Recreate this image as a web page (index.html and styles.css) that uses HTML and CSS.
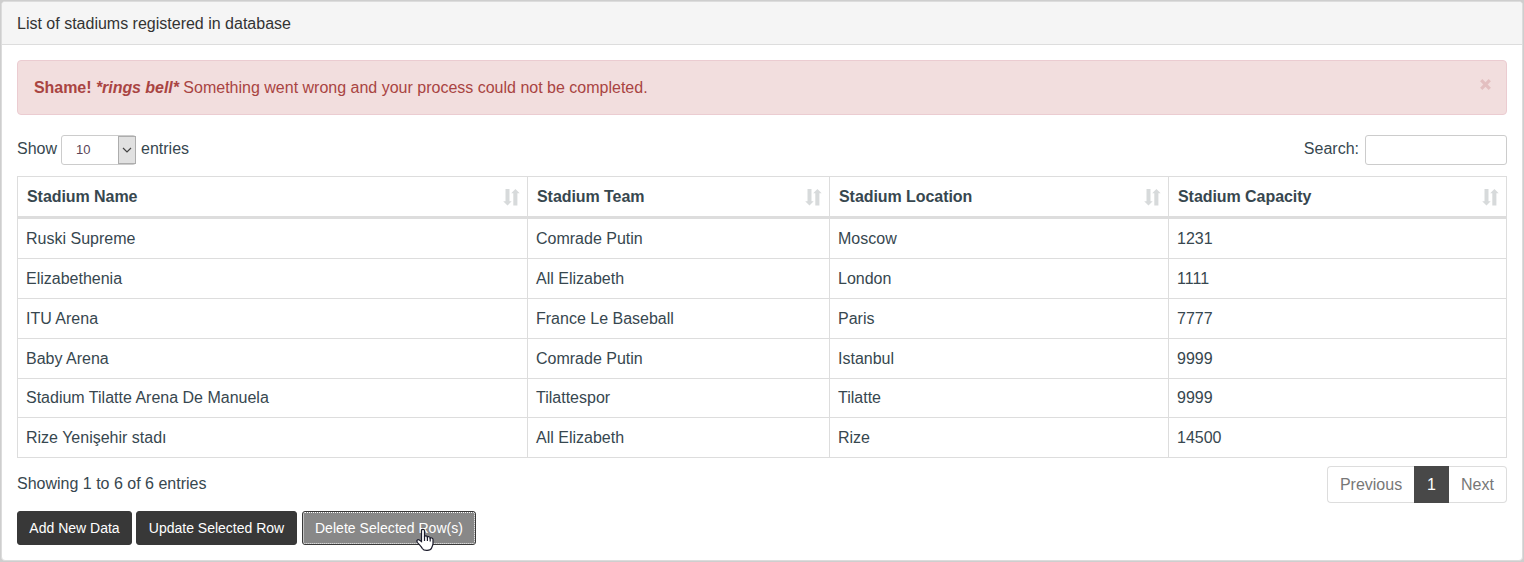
FILE: index.html
```html
<!DOCTYPE html>
<html lang="en">
<head>
<meta charset="utf-8">
<title>Stadiums</title>
<link rel="stylesheet" href="styles.css">
</head>
<body>
<svg class="defs" width="0" height="0"><defs>
<symbol id="sort" viewBox="0 0 17 17"><path d="M2.500 0h4v12.200h2.200L4.500 16.500.2 12.200h2.300zM10.300 16.500v-12.200H8.200L12.400 0l4.300 4.300h-2.300v12.200z"/></symbol>
</defs></svg>
<section class="panel">
  <header class="panel-heading">List of stadiums registered in database</header>
  <div class="panel-body">
    <div class="alert"><p class="message"><strong>Shame! <em>*rings bell*</em></strong> Something went wrong and your process could not be completed.</p>
      <svg class="close" viewBox="0 0 11 11"><path d="M1.200 1.200l8.600 8.600M9.800 1.200L1.200 9.800"/></svg></div>
    <div class="controls">
      <div class="length"><span class="show">Show</span><span class="select"><span class="value">10</span><span class="drop"><svg viewBox="0 0 10 6" width="10" height="6"><path d="M1 1l4 4 4-4"/></svg></span></span><span>entries</span></div>
      <label class="search">Search:<input class="field" type="text"></label>
    </div>
    <table class="table">
      <colgroup><col class="c1"><col class="c2"><col class="c3"><col class="c4"></colgroup>
      <thead><tr>
        <th><div class="th">Stadium Name<svg class="sort"><use href="#sort"/></svg></div></th>
        <th><div class="th">Stadium Team<svg class="sort"><use href="#sort"/></svg></div></th>
        <th><div class="th">Stadium Location<svg class="sort"><use href="#sort"/></svg></div></th>
        <th><div class="th">Stadium Capacity<svg class="sort"><use href="#sort"/></svg></div></th>
      </tr></thead>
      <tbody>
        <tr><td>Ruski Supreme</td><td>Comrade Putin</td><td>Moscow</td><td>1231</td></tr>
        <tr><td>Elizabethenia</td><td>All Elizabeth</td><td>London</td><td>1111</td></tr>
        <tr><td>ITU Arena</td><td>France Le Baseball</td><td>Paris</td><td>7777</td></tr>
        <tr><td>Baby Arena</td><td>Comrade Putin</td><td>Istanbul</td><td>9999</td></tr>
        <tr class="short"><td>Stadium Tilatte Arena De Manuela</td><td>Tilattespor</td><td>Tilatte</td><td>9999</td></tr>
        <tr><td>Rize Yenişehir stadı</td><td>All Elizabeth</td><td>Rize</td><td>14500</td></tr>
      </tbody>
    </table>
    <div class="footer">
      <span class="info">Showing 1 to 6 of 6 entries</span>
      <div class="pages"><span class="page prev">Previous</span><span class="page active">1</span><span class="page next">Next</span></div>
    </div>
    <div class="actions">
      <button class="btn add">Add New Data</button>
      <button class="btn update">Update Selected Row</button>
      <button class="btn delete">Delete Selected Row(s)</button>
      <svg class="cursor" viewBox="0 0 18 24"><path d="M5.500 13.500V2.400C5.500.9 8.500.9 8.500 2.400V8.500C9 7.400 11.200 7.700 11.400 9.200C12 8.300 14 8.700 14.200 10.100C15.200 9.400 17 9.900 17 11.500V15.500C17 17.500 16 19 15.500 20.200C14.500 22.800 8 23.400 6.300 20.500C5.500 18.800 3.500 17 1.500 14.500C0 12.400 1.800 11 3.300 12z"/><path class="fingers" d="M8.500 8v5M11.400 9v4M14.200 10v3.500"/></svg>
    </div>
  </div>
</section>
</body>
</html>
```
FILE: styles.css
```css
* { box-sizing: border-box; }
body {
  margin: 0;
  height: 562px;
  padding: 1px;
  overflow: hidden;
  background: #cecece;
  color: #37474f;
  font: 16px/24px "Liberation Sans", Arial, sans-serif;
}
.defs { position: absolute; }
.panel {
  height: 560px;
  background: #fff;
  border: 1px solid #dcdcdc;
  border-radius: 4px;
  overflow: hidden;
}
.panel-heading {
  height: 43px;
  padding: 10px 15px 8px;
  background: #f5f5f5;
  border-bottom: 1px solid #ddd;
  color: #333;
}
.panel-body { padding: 15px 15px 0; }
.alert {
  display: flex;
  justify-content: space-between;
  height: 55px;
  padding: 15px 15px 0 16px;
  background: #f2dede;
  border: 1px solid #ebccd1;
  border-radius: 4px;
  color: #a94442;
}
.message { margin: 0; }
.message strong { letter-spacing: -0.05px; }
.close {
  width: 11px;
  height: 11px;
  margin-top: 3px;
  fill: none;
  stroke: #e3bfc0;
  stroke-width: 3.2;
}
.controls {
  display: flex;
  justify-content: space-between;
  height: 61px;
  padding-top: 20px;
}
.length, .search { display: flex; height: 30px; line-height: 27px; }
.show { width: 44px; }
.select {
  display: flex;
  justify-content: space-between;
  width: 75px;
  margin-right: 5px;
  border: 1px solid #ccc;
  border-radius: 3px;
  font-size: 13px;
  color: #5a4458;
}
.value { padding-left: 14px; line-height: 28px; }
.drop {
  display: flex;
  align-items: center;
  justify-content: center;
  width: 18px;
  padding-right: 1px;
  margin-right: -1px;
  background: #e1e1e1;
  border: 1px solid #adadad;
}
.drop path { fill: none; stroke: #444; stroke-width: 1.2; }
.field {
  width: 142px;
  height: 30px;
  margin: 0 0 0 6px;
  border: 1px solid #ccc;
  border-radius: 3px;
}
.table {
  width: 1490px;
  table-layout: fixed;
  border-collapse: separate;
  border-spacing: 0;
  border: solid #ddd;
  border-width: 1px 0 0 1px;
}
.c1 { width: 510px; }
.c2 { width: 302px; }
.c3 { width: 339px; }
.c4 { width: 338px; }
th, td {
  height: 40px;
  padding: 0 8px;
  border: solid #ddd;
  border-width: 0 1px 1px 0;
  text-align: left;
}
th {
  height: 42px;
  padding: 0 7px 0 9px;
  border-bottom-width: 3px;
  letter-spacing: -0.06px;
}
.short td { height: 39px; }
.th { display: flex; justify-content: space-between; align-items: center; }
.sort { width: 17px; height: 17px; margin-top: 2px; fill: #d7dadb; }
.footer { display: flex; justify-content: space-between; height: 53px; padding-top: 8px; }
.info { padding-top: 6px; }
.pages { display: flex; height: 37px; line-height: 35px; text-align: center; color: #777; }
.page { border: 1px solid #ddd; }
.prev { width: 87px; border-right: 0; border-radius: 4px 0 0 4px; }
.active { width: 35px; background: #484848; border-color: #484848; color: #fff; }
.next { width: 58px; border-left: 0; border-radius: 0 4px 4px 0; }
.actions { display: flex; position: relative; }
.btn {
  height: 34px;
  margin: 0;
  padding: 0;
  border: 1px solid #383838;
  border-radius: 3px;
  background: #383838;
  color: #fff;
  font: 14px "Liberation Sans", Arial, sans-serif;
}
.add { width: 115px; margin-right: 4px; }
.update { width: 161px; margin-right: 5px; }
.delete { width: 174px; background: #888; outline: 1px dotted #fff; outline-offset: -2px; letter-spacing: 0.05px; }
.cursor {
  position: absolute;
  left: 399px;
  top: 17px;
  width: 18px;
  height: 24px;
  fill: #fff;
  stroke: #1b1b2b;
  stroke-width: 1.2;
}
.fingers { fill: none; }
```
